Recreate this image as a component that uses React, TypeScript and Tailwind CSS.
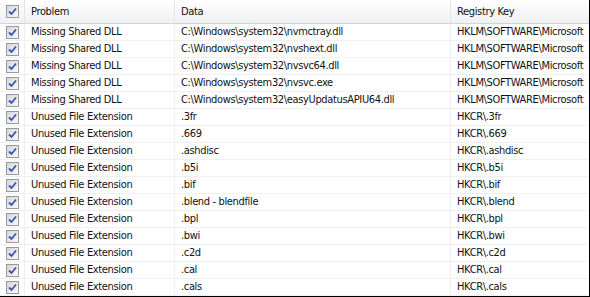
import React from "react";

const rows: [string, string, string][] = [
  ["Missing Shared DLL", "C:\\Windows\\system32\\nvmctray.dll", "HKLM\\SOFTWARE\\Microsoft"],
  ["Missing Shared DLL", "C:\\Windows\\system32\\nvshext.dll", "HKLM\\SOFTWARE\\Microsoft"],
  ["Missing Shared DLL", "C:\\Windows\\system32\\nvsvc64.dll", "HKLM\\SOFTWARE\\Microsoft"],
  ["Missing Shared DLL", "C:\\Windows\\system32\\nvsvc.exe", "HKLM\\SOFTWARE\\Microsoft"],
  ["Missing Shared DLL", "C:\\Windows\\system32\\easyUpdatusAPIU64.dll", "HKLM\\SOFTWARE\\Microsoft"],
  ["Unused File Extension", ".3fr", "HKCR\\.3fr"],
  ["Unused File Extension", ".669", "HKCR\\.669"],
  ["Unused File Extension", ".ashdisc", "HKCR\\.ashdisc"],
  ["Unused File Extension", ".b5i", "HKCR\\.b5i"],
  ["Unused File Extension", ".bif", "HKCR\\.bif"],
  ["Unused File Extension", ".blend - blendfile", "HKCR\\.blend"],
  ["Unused File Extension", ".bpl", "HKCR\\.bpl"],
  ["Unused File Extension", ".bwi", "HKCR\\.bwi"],
  ["Unused File Extension", ".c2d", "HKCR\\.c2d"],
  ["Unused File Extension", ".cal", "HKCR\\.cal"],
  ["Unused File Extension", ".cals", "HKCR\\.cals"],
];

function Check() {
  return (
    <div className="w-[13px] h-[13px] border border-[#9a9a9a] bg-gradient-to-br from-[#d6d6d6] to-[#fafafa] flex items-center justify-center">
      <svg width="9" height="9" viewBox="0 0 9 9">
        <path d="M1 4.5 L3.5 7 L8 1.5" stroke="#3d4fb0" strokeWidth="1.8" fill="none" />
      </svg>
    </div>
  );
}

export default function App() {
  return (
    <div
      className="w-[590px] h-[297px] bg-white overflow-hidden border-r border-b border-black text-[11px] tracking-[-0.35px] text-[#111]"
      style={{ fontFamily: '"DejaVu Sans Condensed", "DejaVu Sans", sans-serif', fontStretch: "condensed" }}
    >
      <div className="flex h-[24px] bg-gradient-to-b from-white to-[#eef0f2] border-b border-[#d5d5d5]">
        <div className="w-[25px] shrink-0 flex items-center pl-[6px] border-r border-[#e3e3e3]">
          <Check />
        </div>
        <div className="w-[150px] shrink-0 flex items-center pl-[6px] pt-px border-r border-[#e3e3e3]">Problem</div>
        <div className="w-[276px] shrink-0 flex items-center pl-[6px] pt-px border-r border-[#e3e3e3]">Data</div>
        <div className="flex-1 flex items-center pl-[6px] pt-px whitespace-nowrap overflow-hidden">Registry Key</div>
      </div>
      {rows.map((r, i) => (
        <div key={i} className="flex h-[17px] border-b border-[#f0f0f0]">
          <div className="w-[25px] shrink-0 flex items-center pl-[6px] border-r border-[#f0f0f0]">
            <Check />
          </div>
          <div className="w-[150px] shrink-0 flex items-center pl-[6px] pt-px border-r border-[#f0f0f0] whitespace-nowrap overflow-hidden">{r[0]}</div>
          <div className="w-[276px] shrink-0 flex items-center pl-[6px] pt-px border-r border-[#f0f0f0] whitespace-nowrap overflow-hidden">{r[1]}</div>
          <div className="flex-1 flex items-center pl-[6px] pt-px whitespace-nowrap overflow-hidden">{r[2]}</div>
        </div>
      ))}
    </div>
  );
}
